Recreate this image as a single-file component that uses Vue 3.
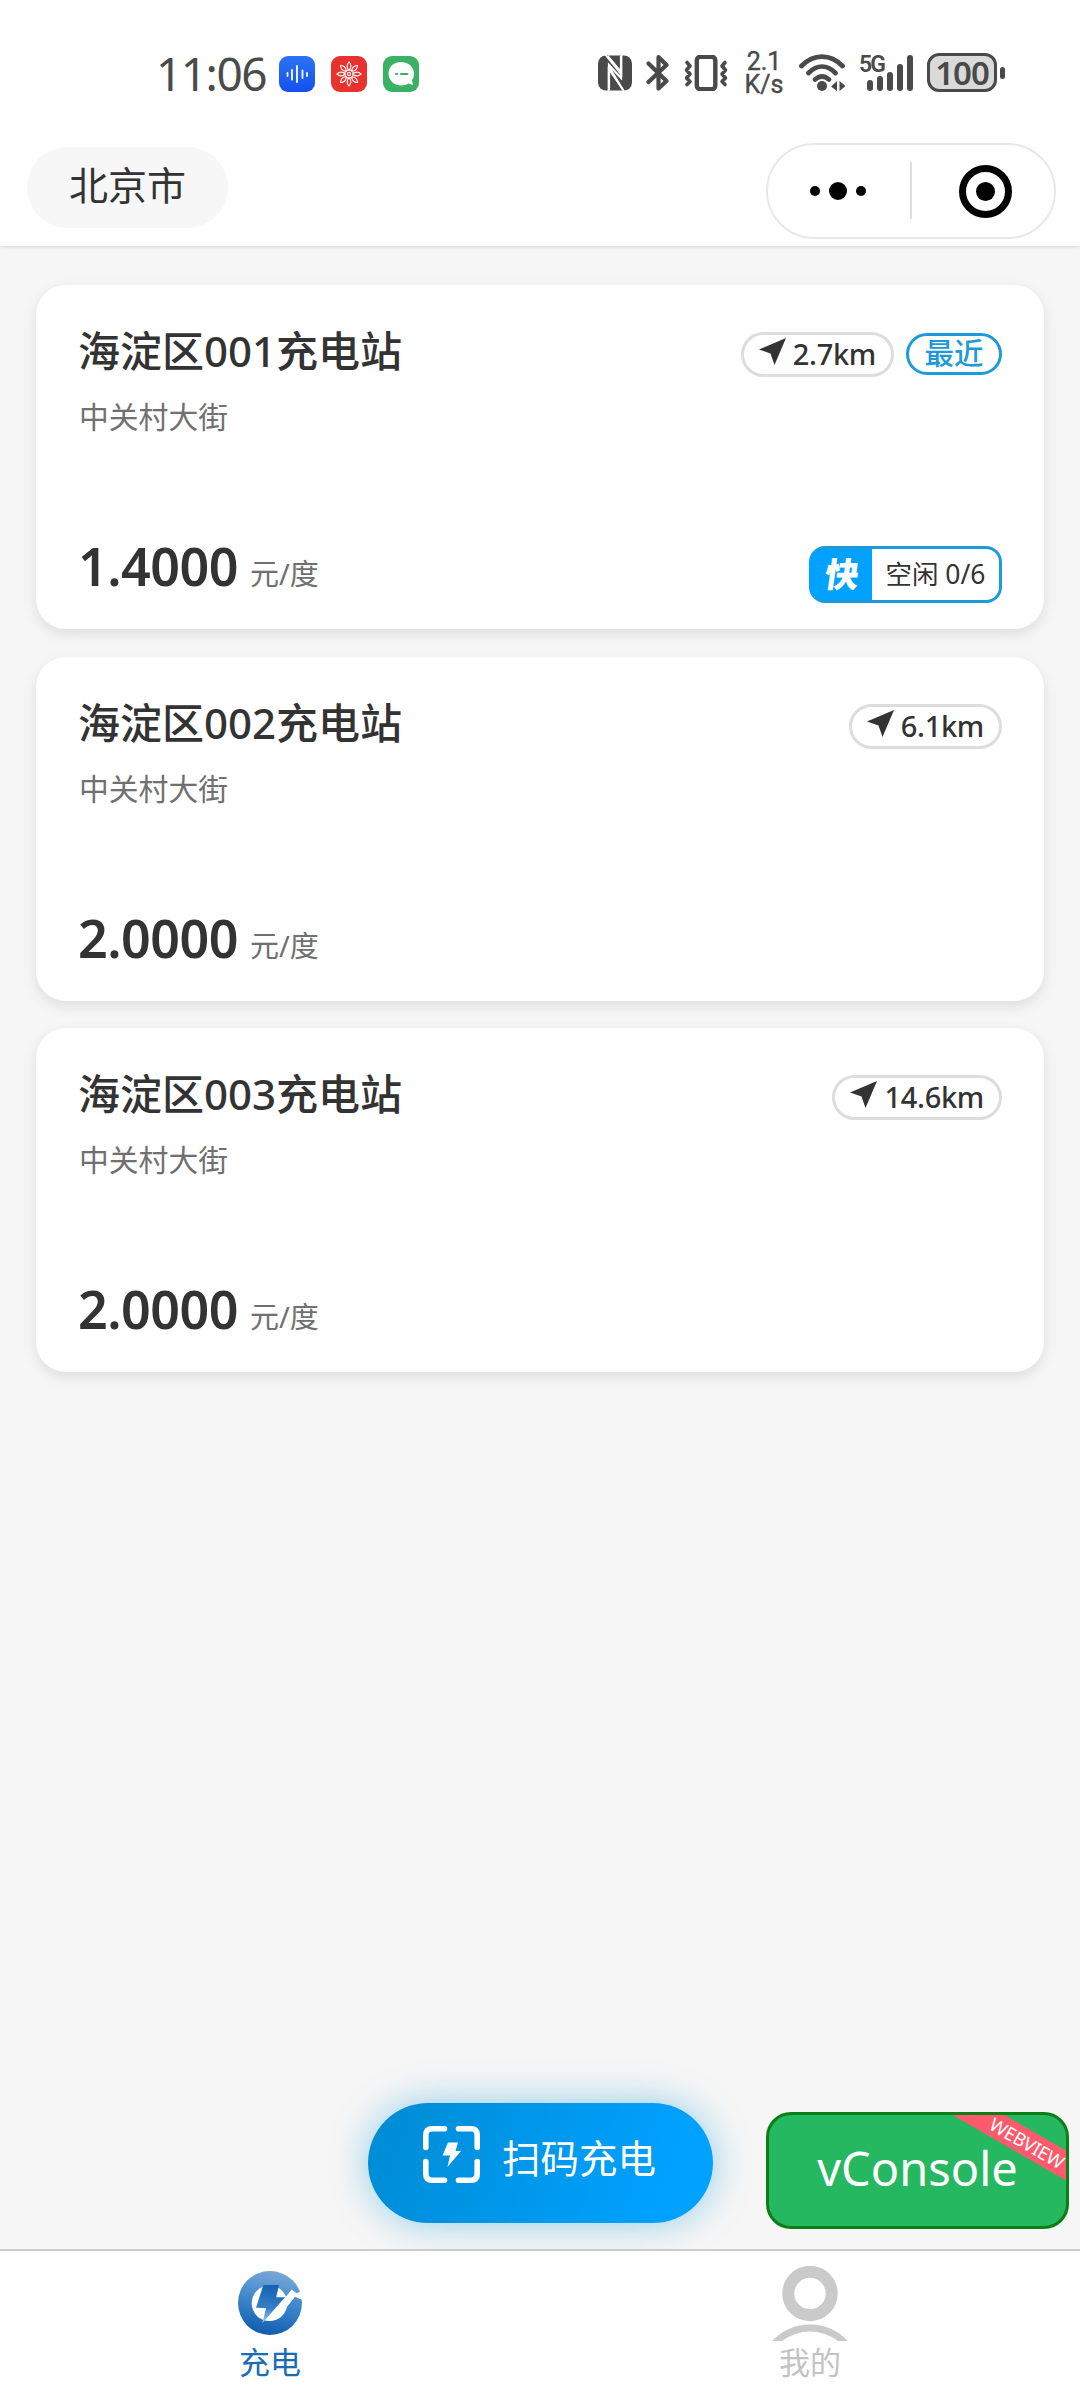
<script setup>
const stations = [
  { name: '海淀区001充电站', address: '中关村大街', price: '1.4000', distance: '2.7km', nearest: true, fast: '空闲 0/6' },
  { name: '海淀区002充电站', address: '中关村大街', price: '2.0000', distance: '6.1km' },
  { name: '海淀区003充电站', address: '中关村大街', price: '2.0000', distance: '14.6km' },
]
</script>

<template>
  <div class="app">
    <header class="header">
      <div class="status">
        <span class="time">11:06</span>
        <div class="apps">
          <svg width="36" height="36" viewBox="0 0 36 36">
            <defs>
              <linearGradient id="voice" x1="0" y1="0" x2="0" y2="1">
                <stop offset="0" stop-color="#2b74f3" />
                <stop offset="1" stop-color="#1450ee" />
              </linearGradient>
            </defs>
            <rect width="36" height="36" rx="9" fill="url(#voice)" />
            <path d="M8.500 17v3M13 14v9.500M18 10v16M23.500 14.500v7.500M28 17v3" stroke="#fff" stroke-width="1.800" stroke-linecap="round" />
          </svg>
          <svg width="36" height="36" viewBox="0 0 36 36">
            <rect width="36" height="36" rx="9" fill="#e8322f" />
            <g fill="none" stroke="#fff" stroke-width="1.2" opacity=".95">
              <path v-for="a in 8" :key="a" d="M18 14.500C15 10.500 16 8.500 18 6C20 8.500 21 10.500 18 14.500" :transform="`rotate(${a * 45} 18 18)`" />
              <circle cx="18" cy="18" r="4.200" />
              <circle cx="18" cy="18" r="1.600" />
            </g>
          </svg>
          <svg width="36" height="36" viewBox="0 0 36 36">
            <rect width="36" height="36" rx="9" fill="#3bb263" />
            <path d="M18 6C10.500 6 5.500 11 5.500 17.500C5.500 24.500 11 29.500 18 29.500C21 29.500 23.500 28.700 25.500 27.500L30 29L29 24C30.500 22 31 20 31 17.500C31 11 25.500 6 18 6Z" fill="#fff" />
            <path d="M13 18h1.200M18 18h6.500" stroke="#3bb263" stroke-width="2" stroke-linecap="round" />
          </svg>
        </div>
        <div class="signals">
          <svg class="nfc" width="34" height="36" viewBox="0 0 34 36">
            <rect width="34" height="35" y=".5" rx="8" fill="#4a4a4a" />
            <path d="M9.500 1L23 17V1.500M23 1V23L11 10V35M11 34V12L25 35" fill="none" stroke="#fff" stroke-width="2.200" />
            <path d="M7.500 0L23.500 20V0M10.500 36V14L26 36" fill="none" stroke="#fff" stroke-width="1.600" />
          </svg>
          <svg class="bt" width="24" height="38" viewBox="0 0 24 38">
            <path d="M2.500 9.500L20.500 27L12.500 34.500V3L20.500 11L2.500 28" fill="none" stroke="#4a4a4a" stroke-width="4.200" stroke-linecap="round" stroke-linejoin="round" />
          </svg>
          <svg class="vib" width="44" height="36" viewBox="0 0 44 36">
            <rect x="12.800" y="1.800" width="18.500" height="32.500" rx="3.500" fill="none" stroke="#4a4a4a" stroke-width="4.400" />
            <path d="M3 7.500L6 11L2.500 15L6 19L2.500 23L6 26.500L3 29.500M41 7.500L38 11L41.500 15L38 19L41.500 23L38 26.500L41 29.500" fill="none" stroke="#4a4a4a" stroke-width="3.600" stroke-linecap="round" stroke-linejoin="round" />
          </svg>
          <div class="rate">2.1<br>K/s</div>
          <svg class="wifi" width="48" height="38" viewBox="0 0 48 38">
            <g fill="none" stroke="#4a4a4a" stroke-width="4.800" stroke-linecap="round">
              <path d="M2.500 12C14.500-.5 31.500-.5 43.500 12" />
              <path d="M9.500 19C18 10.500 28 10.500 36.500 19" />
              <path d="M16 25.500C20.500 21.500 25.500 21.500 30 25.500" />
            </g>
            <circle cx="23" cy="32" r="5" fill="#4a4a4a" />
            <path d="M38 27v10l-6-4.500zM40.500 27v10l6-5z" fill="#4a4a4a" />
          </svg>
          <div class="cell">
            <span class="gen">5G</span>
            <svg width="46" height="36" viewBox="0 0 46 36">
              <path d="M3 28V33M13 24V33M23 20V33M33 12V33M43 3V33" stroke="#4a4a4a" stroke-width="6" stroke-linecap="round" />
            </svg>
          </div>
          <div class="battery">100</div>
          <i class="nub"></i>
        </div>
      </div>
      <div class="nav">
        <div class="city">北京市</div>
        <div class="capsule">
          <svg width="286" height="92" viewBox="0 0 286 92">
            <circle cx="47" cy="46" r="5" /><circle cx="70" cy="46" r="9" /><circle cx="93" cy="46" r="5" />
            <path d="M143 17V74" stroke="#dedede" stroke-width="2" />
            <circle cx="217.500" cy="46.500" r="23" fill="none" stroke="#000" stroke-width="7" />
            <circle cx="217.500" cy="46.500" r="9.500" />
          </svg>
        </div>
      </div>
    </header>

    <main class="list">
      <section v-for="s in stations" :key="s.name" class="card">
        <div class="top">
          <h2>{{ s.name }}</h2>
          <div class="badges">
            <div class="distance">
              <svg width="27" height="27" viewBox="0 0 27 27"><path d="M27 0L0 11.500L11.500 15.500L15.500 27Z" fill="#333" /></svg>
              <span>{{ s.distance }}</span>
            </div>
            <div v-if="s.nearest" class="nearest">最近</div>
          </div>
        </div>
        <p class="address">{{ s.address }}</p>
        <div class="bottom">
          <div class="cost"><span class="price">{{ s.price }}</span><span class="unit">元/度</span></div>
          <div v-if="s.fast" class="fast"><b>快</b><span>{{ s.fast }}</span></div>
        </div>
      </section>
    </main>

    <button class="scan">
      <svg width="57" height="57" viewBox="0 0 57 57">
        <path d="M2.800 21.500V9Q2.800 2.800 9 2.800H21.500M35.500 2.800H48Q54.200 2.800 54.200 9V21.500M54.200 35.500V48Q54.200 54.200 48 54.200H35.500M21.500 54.200H9Q2.800 54.200 2.800 48V35.500" fill="none" stroke="#fff" stroke-width="5.600" stroke-linecap="round" />
        <path d="M25 16.500H35L32.500 25H38L24.500 41L27 29.500H19.500Z" fill="#fff" />
      </svg>
      <span>扫码充电</span>
    </button>
    <button class="vconsole">vConsole<span class="ribbon">WEBVIEW</span></button>

    <nav class="tabs">
      <div class="tab active">
        <svg width="80" height="70" viewBox="0 0 80 70">
          <defs>
            <linearGradient id="ring" x1=".6" y1="0" x2=".4" y2="1">
              <stop offset="0" stop-color="#79a9d8" />
              <stop offset=".5" stop-color="#3c86ca" />
              <stop offset="1" stop-color="#0f5cae" />
            </linearGradient>
            <linearGradient id="bolt" x1=".5" y1="0" x2=".4" y2="1">
              <stop offset="0" stop-color="#1560b0" />
              <stop offset=".6" stop-color="#347fc6" />
              <stop offset="1" stop-color="#a9c8e8" />
            </linearGradient>
          </defs>
          <circle cx="40" cy="38" r="32" fill="url(#ring)" />
          <circle cx="39.500" cy="38.300" r="17.800" fill="#fff" />
          <path d="M54 34L61.700 24.500L66.700 28.300L73 25.500V35.200L65 31.700L56 43Z" fill="#fff" />
          <path d="M33.300 20H49L46.200 32.300H55L32.300 58.300L36 43.300L26 42.700Z" fill="url(#bolt)" />
        </svg>
        <span>充电</span>
      </div>
      <div class="tab mine">
        <svg width="80" height="76" viewBox="0 0 80 76">
          <circle cx="40" cy="27.500" r="21.700" fill="none" stroke="#cacaca" stroke-width="12" />
          <path d="M2 75Q18 58.500 40 58.500T78 75H68Q55 65.500 40 65.500T12 75Z" fill="#cacaca" />
        </svg>
        <span>我的</span>
      </div>
    </nav>
  </div>
</template>

<style>
body { margin: 0; }
</style>

<style scoped>
* { box-sizing: border-box; }
.app {
  position: relative;
  display: flex;
  flex-direction: column;
  width: 1080px;
  height: 2400px;
  background: #f6f6f6;
  color: #333;
  font-family: "Noto Sans", "Noto Sans CJK SC", sans-serif;
  overflow: hidden;
}
svg { display: block; flex: none; }
.header { height: 246px; background: #fff; box-shadow: 0 1px 4px rgba(0, 0, 0, .13); }
.status { display: flex; height: 143px; padding: 0 75px 0 156px; align-items: flex-start; color: #4a4a4a; }
.time { width: 123px; margin-top: 48px; font-size: 46px; line-height: 50px; letter-spacing: -1.5px; }
.apps { display: flex; gap: 16px; margin-top: 56px; }
.signals { display: flex; margin-left: auto; height: 143px; }
.nfc { margin: 55px 14px 0 0; }
.bt { margin: 54px 14px 0 0; }
.vib { margin: 55px 16px 0 0; }
.rate { width: 40px; margin: 51px 15px 0 0; font: 25px/22.5px Roboto, sans-serif; text-align: center; -webkit-text-stroke: .4px #4a4a4a; }
.wifi { margin: 54px 13px 0 0; }
.cell { position: relative; width: 54px; margin: 55px 13px 0 0; padding-left: 7px; }
.gen { position: absolute; left: -1px; top: 0; font: 600 23px/19px Roboto, sans-serif; letter-spacing: -1.800px; }
.battery { width: 70px; height: 39px; margin-top: 53px; border: 3px solid #4a4a4a; border-radius: 12px; background: #dadada; font-size: 33px; font-weight: 600; line-height: 33px; text-align: center; letter-spacing: -1px; }
.nub { width: 5px; height: 12px; margin: 67px 0 0 3px; border-radius: 3px; background: #4a4a4a; }
.nav { display: flex; justify-content: space-between; padding: 0 24px 0 27px; }
.city { width: 201px; height: 81px; margin-top: 4px; border-radius: 41px; background: #f7f7f7; font-size: 39px; line-height: 75px; padding-left: 42px; }
.capsule { width: 290px; height: 96px; border: 2px solid #e8e8e8; border-radius: 48px; }

.list { flex: 1; display: flex; flex-direction: column; gap: 27.500px; padding: 39px 36px 0; }
.card { height: 344px; padding: 0 42px; border-radius: 30px; background: #fff; box-shadow: 0 5px 14px rgba(0, 0, 0, .1); }
.top { display: flex; justify-content: space-between; height: 110px; padding-top: 44px; }
h2 { margin: 0; font-size: 42px; font-weight: 500; line-height: 44px; }
.badges { display: flex; gap: 12px; margin-top: 3px; }
.distance { display: flex; height: 45px; padding: 0 15px 0 15px; border: 3px solid #ddd; border-radius: 23px; font-size: 29px; font-weight: 500; line-height: 38px; gap: 7px; }
.distance svg { margin-top: 3px; }
.distance span { letter-spacing: -.3px; }
.nearest { width: 96px; height: 42px; margin-top: 1px; border: 3px solid #1c9ad9; border-radius: 21px; color: #1c9ad9; font-size: 29.500px; font-weight: 500; line-height: 33px; text-align: center; }
.address { margin: 0; padding-left: 1px; color: #707070; font-size: 29.800px; line-height: 43px; }
.bottom { display: flex; justify-content: space-between; margin-top: 98px; }
.cost { display: flex; align-items: baseline; margin-top: -5px; line-height: 70px; }
.price { font-size: 52px; font-weight: 600; letter-spacing: -.5px; }
.unit { position: relative; top: -1px; margin-left: 12px; color: #707070; font-size: 29px; }
.fast { display: flex; width: 193px; height: 57px; margin-top: 10px; border: 3px solid #1c9ad9; border-left-color: #00a1ff; border-radius: 16px; overflow: hidden; background: linear-gradient(90deg, #00a1ff 60px, #fff 60px); }
.fast b { width: 60px; color: #fff; font-size: 34px; font-weight: 900; line-height: 50px; text-align: center; transform: skewX(-8deg); }
.fast span { flex: 1; font-size: 26.500px; line-height: 51px; text-align: center; white-space: nowrap; }

button { border: 0; padding: 0; font-family: inherit; }
.scan { position: absolute; left: 368px; top: 2103px; width: 345px; height: 120px; display: flex; align-items: flex-start; border-radius: 60px; background: linear-gradient(110deg, #008bd3, #00a1ff 85%); box-shadow: 0 0 38px rgba(0, 150, 220, .42); color: #fff; padding: 23px 0 0 55px; }
.scan span { margin-left: 22px; font-size: 38.500px; line-height: 64px; }
.vconsole { position: absolute; left: 766px; top: 2112px; width: 303px; height: 117px; border: 3px solid #0b7f16; border-radius: 25px; background: #25b860; color: #fff; font-size: 47px; line-height: 107px; overflow: hidden; padding-bottom: 4px; }
.ribbon { position: absolute; left: 168px; top: 15px; width: 180px; height: 26px; transform: rotate(30deg); background: #fb5b6c; font-size: 18.500px; line-height: 25px; letter-spacing: -.3px; text-align: center; }

.tabs { position: relative; display: flex; height: 151px; border-top: 2px solid #ccc; background: #fff; }
.tab { flex: 1; display: flex; flex-direction: column; align-items: center; padding-top: 14px; color: #c3c3c3; font-size: 31px; line-height: 44px; }
.tab span { margin-top: -1px; }
.tab.active svg { margin-bottom: 6px; }
.mine svg { margin: 1px 0 -1px; }
.active { color: #1a6db5; }
</style>
